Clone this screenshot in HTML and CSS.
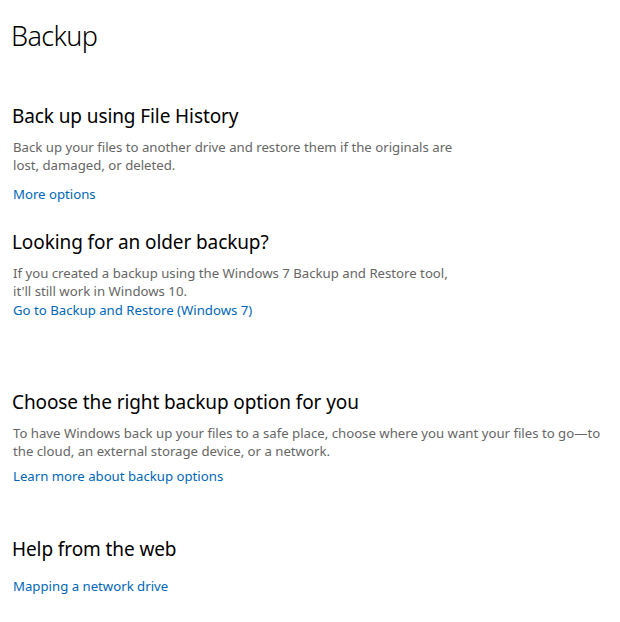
FILE: index.html
```html
<!DOCTYPE html>
<html lang="en">
<head>
<meta charset="utf-8">
<title>Backup</title>
<link rel="stylesheet" href="styles.css">
</head>
<body>
<main class="page">
  <h1 class="title">Backup</h1>

  <section class="group group-first">
    <h2 class="heading">Back up using File History</h2>
    <p class="desc">Back up your files to another drive and restore them if the originals are<br>lost, damaged, or deleted.</p>
    <a class="link link-spaced" href="#">More options</a>
  </section>

  <section class="group group-second">
    <h2 class="heading">Looking for an older backup?</h2>
    <p class="desc">If you created a backup using the Windows 7 Backup and Restore tool,<br>it'll still work in Windows 10.</p>
    <a class="link" href="#">Go to Backup and Restore (Windows 7)</a>
  </section>

  <section class="group group-wide">
    <h2 class="heading">Choose the right backup option for you</h2>
    <p class="desc">To have Windows back up your files to a safe place, choose where you want your files to go—to<br>the cloud, an external storage device, or a network.</p>
    <a class="link link-close" href="#">Learn more about backup options</a>
  </section>

  <section class="group group-web">
    <h2 class="heading">Help from the web</h2>
    <a class="link link-web" href="#">Mapping a network drive</a>
  </section>
</main>
</body>
</html>
```

FILE: styles.css
```css
html, body {
  margin: 0;
  padding: 0;
  background: #ffffff;
}

body {
  font-family: "Noto Sans", "Open Sans", "DejaVu Sans", sans-serif;
  color: #000000;
}

.page {
  padding: 16px 0 0 12px;
  display: flex;
  flex-direction: column;
}

.title {
  margin: 0 0 0 -1px;
  font-size: 27px;
  font-weight: 300;
  letter-spacing: -0.6px;
  line-height: 40px;
}

.group {
  display: flex;
  flex-direction: column;
  align-items: flex-start;
}

.group-first {
  margin-top: 46px;
}

.group-second {
  margin-top: 24px;
}

.group-wide {
  margin-top: 68px;
}

.group-web {
  margin-top: 49px;
}

.heading {
  margin: 0;
  font-size: 19px;
  font-weight: 400;
  letter-spacing: -0.1px;
  line-height: 28px;
}

.desc {
  margin: 8px 0 0 1px;
  font-size: 13.2px;
  line-height: 18px;
  color: #666666;
}

.link {
  margin-left: 1px;
  font-size: 13.2px;
  line-height: 20px;
  color: #0067b8;
  text-decoration: none;
}

.link-spaced {
  margin-top: 10px;
}

.link-close {
  margin-top: 6px;
}

.link-web {
  margin-top: 13px;
}
```
